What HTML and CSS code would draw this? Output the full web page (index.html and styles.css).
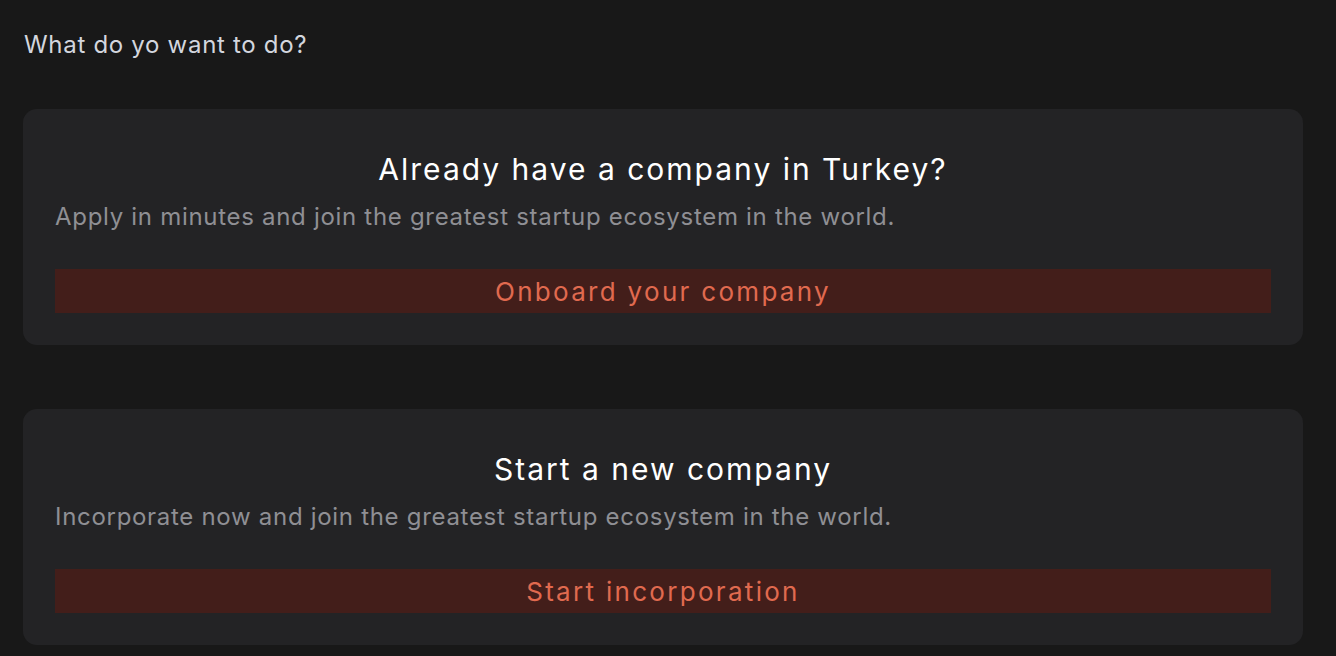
FILE: index.html
```html
<!DOCTYPE html>
<html lang="en">
<head>
    <meta charset="UTF-8">
    <meta name="viewport" content="width=device-width, initial-scale=1.0">
    <title>What do you want to do?</title>
    <link rel="stylesheet" href="styles.css">
</head>
<body>

<div class="page">
    <p class="question">What do yo want to do?</p>

    <div class="choices">
        <div class="choice-card">
            <h2 class="choice-title">Already have a company in Turkey?</h2>
            <p class="choice-text">Apply in minutes and join the greatest startup ecosystem in the world.</p>
            <button class="choice-btn">Onboard your company</button>
        </div>

        <div class="choice-card">
            <h2 class="choice-title">Start a new company</h2>
            <p class="choice-text">Incorporate now and join the greatest startup ecosystem in the world.</p>
            <button class="choice-btn">Start incorporation</button>
        </div>
    </div>
</div>

</body>
</html>
```

FILE: styles.css
```css
body {
    margin: 0;
    background-color: #181818;
    font-family: Inter, "Open Sans", sans-serif;
    overflow: hidden;
}
.page {
    padding: 30px 33px 0 23px;
}
.question {
    margin: 0 0 49px 1px;
    font-size: 24px;
    line-height: 30px;
    letter-spacing: 0.7px;
    color: #d3d6de;
}
.choices {
    display: flex;
    flex-direction: column;
    gap: 64px;
}
.choice-card {
    display: flex;
    flex-direction: column;
    padding: 32px;
    background-color: #232325;
    border-radius: 14px;
}
.choice-title {
    margin: 0;
    text-align: center;
    font-size: 30px;
    font-weight: 400;
    line-height: 56px;
    letter-spacing: 2px;
    color: #ffffff;
}
.choice-text {
    margin: 0 0 32px;
    font-size: 24px;
    line-height: 40px;
    letter-spacing: 0.7px;
    color: #8f8f94;
}
.choice-btn {
    height: 44px;
    padding: 0;
    border: none;
    background-color: #431e1a;
    color: #e06a4f;
    font-family: inherit;
    font-size: 26px;
    letter-spacing: 2.3px;
    cursor: pointer;
}
```
